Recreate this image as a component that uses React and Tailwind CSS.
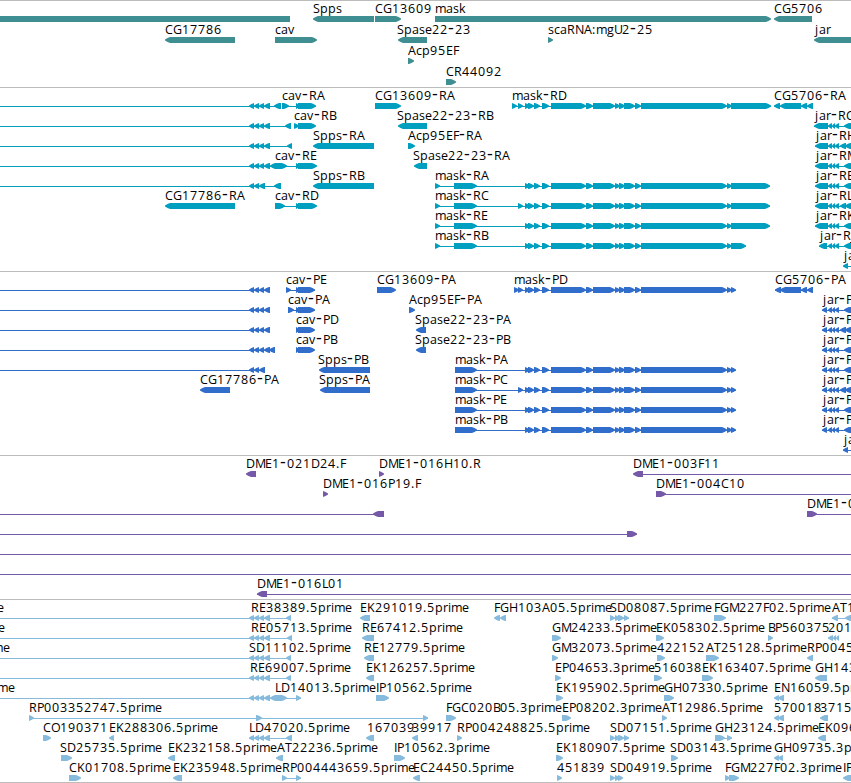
import React from "react";

// Horizontal advance of each label character, in pixels.
const ADVANCE = {
  A: 8, B: 7, C: 8, D: 9, E: 7, F: 6, G: 9, H: 9, I: 3, J: 4, K: 8, L: 6, M: 10, N: 9,
  O: 9, P: 7, R: 8, S: 7, T: 7, U: 8, a: 7, c: 6, e: 7, g: 7, i: 3, j: 4, k: 7, m: 11,
  p: 8, r: 5, s: 6, v: 7, "-": 7, ".": 4, ":": 4,
};

function glyphPositions(x, text) {
  let cursor = x;
  return Array.from(text)
    .map((ch) => {
      const at = cursor;
      cursor += ADVANCE[ch] ?? 8;
      return at;
    })
    .join(" ");
}

// Hyphens are set larger so that they span their whole advance.
function Label({ x, y, text }) {
  return (
    <text x={glyphPositions(x, text)} y={y}>
      {text.split(/(-)/).map((part, i) =>
        part === "-" ? (
          <tspan key={i} className="text-[18px]">-</tspan>
        ) : (
          part
        ),
      )}
    </text>
  );
}

// Shape syntax: "a~b" intron line, "a-b=" plain block, "a-b>" / "a-b<" stranded block.
function Shape({ code, y }) {
  const [, a, kind, b, dir] = code.match(/^(\d+)([~-])(\d+)([<>=]?)$/);
  const x0 = Number(a);
  const x1 = Number(b);
  if (kind === "~") return <rect x={x0} y={y + 3} width={x1 - x0} height="1" />;
  if (dir === "=") return <rect x={x0} y={y} width={x1 - x0} height="6" />;
  const tip = Math.min(5, x1 - x0);
  const points =
    dir === ">"
      ? `${x0},${y} ${x1 - tip},${y} ${x1 - tip / 2},${y + 1} ${x1},${y + 2.6} ${x1},${y + 3.4} ${x1 - tip / 2},${y + 5} ${x1 - tip},${y + 6} ${x0},${y + 6}`
      : `${x1},${y} ${x0 + tip},${y} ${x0 + tip / 2},${y + 1} ${x0},${y + 2.6} ${x0},${y + 3.4} ${x0 + tip / 2},${y + 5} ${x0 + tip},${y + 6} ${x1},${y + 6}`;
  return <polygon points={points} />;
}

function Track({ className, height, step = 20, rows }) {
  return (
    <section className={`shrink-0 border-t border-[#bcbcbc] ${className}`}>
      <svg width="851" height={height - 1} className="block overflow-hidden">
        {rows.map(([shapes, labels], i) => {
          const y = 15 + i * step;
          return (
            <g key={i}>
              <g fill="currentColor">
                {shapes.split(" ").filter(Boolean).map((code, k) => (
                  <Shape key={k} code={code} y={y} />
                ))}
              </g>
              <g fill="#000">
                {labels.map(([x, text]) => (
                  <Label key={x} x={x} y={y - 3} text={text} />
                ))}
              </g>
            </g>
          );
        })}
      </svg>
    </section>
  );
}

const THREE = "249-254< 254-259< 259-265<";
const FOUR = "249-254< 254-259< 259-264< 264-270<";
const MASK =
  "525-530> 528-534> 534-540> 542-549> 551-586> 586-593> 593-615> 615-620> 619-625> 624-635> 635-641> 641-727> 727-732>";
const JAR = "828-832< 832-835< 835-839< 844-851<";
const JAR2 = "828-832< 832-835< 835-839< 840-846< 845-851<";
const SD = "610-615> 615-620> 618-624> 624-629> 610~629";

const genes = [
  ["0-290= 313-374< 375-401> 435-771> 774-812<", [[313, "Spps"], [375, "CG13609"], [435, "mask"], [774, "CG5706"]]],
  ["165-235< 275-317> 398-427< 548-553> 814-860<", [[165, "CG17786"], [275, "cav"], [397, "Spase22-23"], [548, "scaRNA:mgU2-25"], [815, "jar"]]],
  ["408-414>", [[408, "Acp95EF"]]],
  ["446-456>", [[446, "CR44092"]]],
];

const transcripts = [
  [`0~281 ${FOUR} 274-281< 282~316 282-289> 296-300> 298-316> 375-401> 512~771 512-517> 518-523> ${MASK} 731-771> 774~813 774-780< 780-801< 801-807< 807-813<`,
    [[282, "cav-RA"], [375, "CG13609-RA"], [512, "mask-RD"], [774, "CG5706-RA"]]],
  [`0~291 ${FOUR} 285-291< 294-299> 298-316> 398-427< 814~851 814-828< ${JAR}`,
    [[294, "cav-RB"], [397, "Spase22-23-RB"], [815, "jar-RC"]]],
  [`0~292 ${FOUR} 287-292< 313-374< 408-415> 815~851 815-828< ${JAR2}`,
    [[313, "Spps-RA"], [408, "Acp95EF-RA"], [816, "jar-RH"]]],
  [`0~316 ${FOUR} 270-276< 275-287> 296-300> 298-317> 414-427< 815~851 815-828< ${JAR}`,
    [[275, "cav-RE"], [413, "Spase22-23-RA"], [816, "jar-RM"]]],
  [`0~281 ${THREE} 274-281< 313-374< 435~770 435-440> 454-477> ${MASK} 731-770> 815~851 815-828< ${JAR}`,
    [[313, "Spps-RB"], [435, "mask-RA"], [816, "jar-RB"]]],
  [`165-235< 275~316 275-285> 296-300> 298-317> 435~770 435-440> 454-477> 518-523> ${MASK} 731-770> 815~851 815-828< ${JAR2}`,
    [[165, "CG17786-RA"], [275, "cav-RD"], [435, "mask-RC"], [816, "jar-RL"]]],
  [`435~770 435-440> 454-477> ${MASK} 731-770> 815~851 815-828< ${JAR}`, [[435, "mask-RE"], [816, "jar-RK"]]],
  [`435~746 435-440> 454-477> ${MASK} 731-746> 819~851 819-827< ${JAR}`, [[435, "mask-RB"], [820, "jar-RJ"]]],
  ["843~851 843-848<", [[844, "jar-RI"]]],
];

const proteins = [
  [`0~270 ${FOUR} 286~315 286-291> 296-300> 298-315> 377-396> 514~736 514-519> 518-523> ${MASK} 731-736> 775~813 775-781< 780-801< 801-807< 807-813<`,
    [[286, "cav-PE"], [377, "CG13609-PA"], [514, "mask-PD"], [775, "CG5706-PA"]]],
  [`0~270 ${FOUR} 288~315 288-294> 296-300> 298-315> 409-415> 822~851 822-827< ${JAR}`,
    [[288, "cav-PA"], [409, "Acp95EF-PA"], [823, "jar-PC"]]],
  [`0~270 ${FOUR} 296-300> 298-315> 416-426< 822~851 822-827< ${JAR2}`,
    [[296, "cav-PD"], [415, "Spase22-23-PA"], [823, "jar-PH"]]],
  [`0~275 ${FOUR} 269-275< 296-300> 298-315> 416-426< 822~851 822-827< ${JAR}`,
    [[296, "cav-PB"], [415, "Spase22-23-PB"], [823, "jar-PM"]]],
  [`0~265 ${THREE} 319-370< 455~736 455-477> ${MASK} 731-736> 822~851 822-827< ${JAR}`,
    [[318, "Spps-PB"], [455, "mask-PA"], [823, "jar-PB"]]],
  [`200-230< 320-370< 455~736 455-477> 518-523> ${MASK} 731-736> 822~851 822-827< ${JAR2}`,
    [[200, "CG17786-PA"], [319, "Spps-PA"], [455, "mask-PC"], [823, "jar-PL"]]],
  [`455~736 455-477> ${MASK} 731-736> 822~851 822-827< ${JAR}`, [[455, "mask-PE"], [823, "jar-PK"]]],
  [`455~736 455-477> ${MASK} 731-736> 822~851 822-827< ${JAR}`, [[455, "mask-PB"], [823, "jar-PJ"]]],
  ["843~851 843-848<", [[844, "jar-PI"]]],
];

const clones = [
  ["246-256< 379-384> 633-643< 643~851", [[246, "DME1-021D24.F"], [379, "DME1-016H10.R"], [633, "DME1-003F11"]]],
  ["323-328> 656-666> 656~851", [[323, "DME1-016P19.F"], [656, "DME1-004C10"]]],
  ["0~384 373-384< 807-817> 807~851", [[807, "DME1-006"]]],
  ["0~637 627-637>", []],
  ["0~851", []],
  ["0~851", []],
  ["257~851 257-267<", [[257, "DME1-016L01"]]],
];

const reads = [
  [`0~291 ${FOUR} 286-291< 360-370< 494-500< 500-506< ${SD} 714-726> 832~851 832-838< 845-851<`,
    [[-30, "prime"], [251, "RE38389.5prime"], [360, "EK291019.5prime"], [494, "FGH103A05.5prime"], [610, "SD08087.5prime"], [714, "FGM227F02.5prime"], [832, "AT1"]]],
  [`0~292 ${FOUR} 287-292< 362-374< 552-561> 656-664> 768-773> 828-833< 833-836< 836-839<`,
    [[-29, "prime"], [251, "RE05713.5prime"], [362, "RE67412.5prime"], [552, "GM24233.5prime"], [656, "EK058302.5prime"], [768, "BP560375"], [828, "2011"]]],
  [`0~291 ${FOUR} 286-291< 364-374< 552-558> 657-665> 706-719> 807-813<`,
    [[-24, "prime"], [249, "SD11102.5prime"], [364, "RE12779.5prime"], [552, "GM32073.5prime"], [657, "422152"], [706, "AT25128.5prime"], [807, "RP00453"]]],
  [`0~291 ${FOUR} 286-291< 366-374< 555-561> 654-662> 702-713> 815-827<`,
    [[250, "RE69007.5prime"], [366, "EK126257.5prime"], [555, "EP04653.3prime"], [654, "516038"], [702, "EK163407.5prime"], [815, "GH143"]]],
  [`0~301 ${FOUR} 270-276< 275-287> 296-301> 376-389> 556-563> 664-674> 774-779< 778-784<`,
    [[-19, "prime"], [275, "LD14013.5prime"], [376, "IP10562.5prime"], [556, "EK195902.5prime"], [664, "GH07330.5prime"], [774, "EN16059.5prime"]]],
  ["29~428 29-34> 256-262> 423-428> 446-456> 562-571> 662-667> 774-779< 778-784< 820-828<",
    [[29, "RP003352747.5prime"], [446, "FGC020B05.3prime"], [562, "EP08202.3prime"], [662, "AT12986.5prime"], [774, "570018"], [820, "3715"]]],
  [`43-51> 109-114< 249~292 ${FOUR} 286-292< 366-374< 412-418< 457-462> ${SD} 715~732 715-725> 727-732> 818-826<`,
    [[43, "CO190371"], [109, "EK288306.5prime"], [249, "LD47020.5prime"], [367, "167039"], [412, "39917"], [457, "RP004248825.5prime"], [610, "SD07151.5prime"], [715, "GH23124.5prime"], [818, "EK096"]]],
  ["61-72> 168-175< 276-283< 394-405> 556-563> 671-678> 774-779< 778-783<",
    [[60, "SD25735.5prime"], [168, "EK232158.5prime"], [277, "AT22236.5prime"], [394, "IP10562.3prime"], [556, "EK180907.5prime"], [670, "SD03143.5prime"], [774, "GH09735.3prime"]]],
  ["69-81> 173-182< 282~301 282-287> 296-301> 413-420< 557-562> 610-615> 615-620> 618-623> 725-730> 729-739> 843-855<",
    [[69, "CK01708.5prime"], [173, "EK235948.5prime"], [282, "RP004443659.5prime"], [413, "EC24450.5prime"], [557, "451839"], [610, "SD04919.5prime"], [725, "FGM227F02.3prime"], [843, "IP1"]]],
];

export default function App() {
  return (
    <main className="flex h-[783px] w-[851px] flex-col overflow-hidden border-b border-[#bcbcbc] bg-white font-['Open_Sans',sans-serif] text-[12.5px]">
      <Track className="text-[#3f8f92]" height={87} step={21} rows={genes} />
      <Track className="text-[#009fc0]" height={184} rows={transcripts} />
      <Track className="text-[#316dca]" height={184} rows={proteins} />
      <Track className="text-[#7559a8]" height={144} rows={clones} />
      <Track className="text-[#87bbdd]" height={183} rows={reads} />
    </main>
  );
}
